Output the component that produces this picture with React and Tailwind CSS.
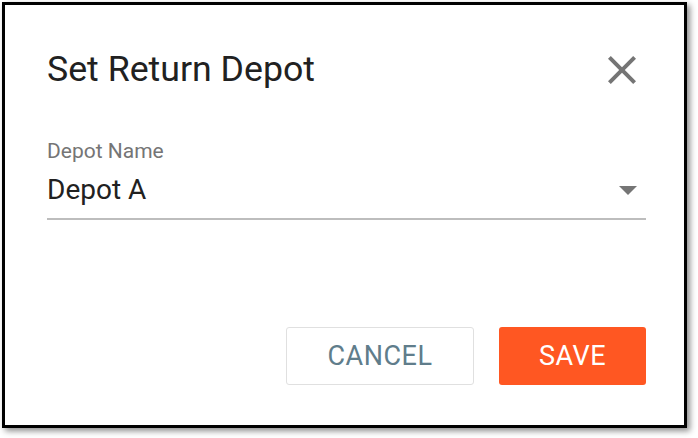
import React from 'react'

export default function App() {
  return (
    <div className="w-[698px] h-[438px] bg-white p-[2px]" style={{ fontFamily: 'Roboto, "Liberation Sans", sans-serif' }}>
      <div className="w-[685px] h-[426px] border-[3px] border-black bg-white shadow-[3px_3px_6px_rgba(0,0,0,0.45)] flex flex-col pl-[42px] pr-[38px] pt-[41px]">
        {/* header */}
        <div className="flex items-center justify-between h-[48px]">
          <h1 className="text-[35.7px] leading-[40px] mb-[3px] font-normal text-[#212121]">Set Return Depot</h1>
          <button className="w-[48px] h-[48px] flex items-center justify-center">
            <svg viewBox="0 0 24 24" width="48" height="48" fill="#757575">
              <path d="M19 6.41L17.59 5 12 10.59 6.41 5 5 6.41 10.59 12 5 17.59 6.41 19 12 13.41 17.59 19 19 17.59 13.41 12z" />
            </svg>
          </button>
        </div>

        {/* select field */}
        <div className="mt-[45px]">
          <div className="text-[21px] leading-[24px] text-[#757575]">Depot Name</div>
          <div className="mt-[11px] pb-[12px] border-b-2 border-[#bdbdbd] flex items-center justify-between">
            <span className="text-[28px] leading-[32px] text-[#212121]">Depot A</span>
            <svg width="18" height="9" viewBox="0 0 18 9" className="mr-[9px]">
              <path d="M0 0h18L9 9z" fill="#757575" />
            </svg>
          </div>
        </div>

        {/* actions */}
        <div className="mt-[107px] flex justify-end gap-[25px]">
          <button className="w-[188px] h-[58px] border border-[#e0e0e0] rounded-[3px] text-[27px] tracking-[0.5px] text-[#607d8b]">
            CANCEL
          </button>
          <button className="w-[147px] h-[58px] bg-[#ff5722] rounded-[3px] text-[27px] tracking-[0.5px] text-white">
            SAVE
          </button>
        </div>
      </div>
    </div>
  )
}
